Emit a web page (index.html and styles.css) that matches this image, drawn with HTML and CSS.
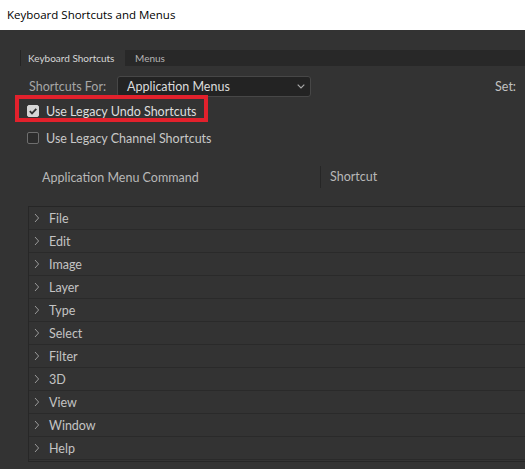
FILE: index.html
```html
<!DOCTYPE html>
<html>
<head>
<meta charset="utf-8">
<link rel="stylesheet" href="styles.css">
</head>
<body>
<div class="window">
  <div class="titlebar">Keyboard Shortcuts and Menus</div>
  <div class="main">
    <div class="tabs">
      <div class="tab active">Keyboard Shortcuts</div>
      <div class="tab">Menus</div>
    </div>
    <div class="for-row">
      <span class="label">Shortcuts For:</span>
      <div class="select">
        <span>Application Menus</span>
        <svg class="chev-down" width="8" height="5" viewBox="0 0 8 5"><path d="M0.7 0.7 L4 4 L7.3 0.7" fill="none" stroke="#a8a8a8" stroke-width="1.2"/></svg>
      </div>
      <span class="set">Set:</span>
    </div>
    <div class="check-row highlight">
      <span class="box checked"><svg width="12" height="12" viewBox="0 0 12 12"><path d="M2.8 6.2 L5 8.4 L9.3 3.8" fill="none" stroke="#333" stroke-width="1.8"/></svg></span>
      <span class="check-label">Use Legacy Undo Shortcuts</span>
    </div>
    <div class="check-row second">
      <span class="box"></span>
      <span class="check-label">Use Legacy Channel Shortcuts</span>
    </div>
    <div class="header">
      <div class="col-cmd">Application Menu Command</div>
      <div class="col-key">Shortcut</div>
    </div>
    <div class="table">
      <div class="item"><svg class="chev" width="6" height="10" viewBox="0 0 6 10"><path d="M1 1 L4.6 5 L1 9" fill="none" stroke="#9a9a9a" stroke-width="1"/></svg>File</div>
      <div class="item"><svg class="chev" width="6" height="10" viewBox="0 0 6 10"><path d="M1 1 L4.6 5 L1 9" fill="none" stroke="#9a9a9a" stroke-width="1"/></svg>Edit</div>
      <div class="item"><svg class="chev" width="6" height="10" viewBox="0 0 6 10"><path d="M1 1 L4.6 5 L1 9" fill="none" stroke="#9a9a9a" stroke-width="1"/></svg>Image</div>
      <div class="item"><svg class="chev" width="6" height="10" viewBox="0 0 6 10"><path d="M1 1 L4.6 5 L1 9" fill="none" stroke="#9a9a9a" stroke-width="1"/></svg>Layer</div>
      <div class="item"><svg class="chev" width="6" height="10" viewBox="0 0 6 10"><path d="M1 1 L4.6 5 L1 9" fill="none" stroke="#9a9a9a" stroke-width="1"/></svg>Type</div>
      <div class="item"><svg class="chev" width="6" height="10" viewBox="0 0 6 10"><path d="M1 1 L4.6 5 L1 9" fill="none" stroke="#9a9a9a" stroke-width="1"/></svg>Select</div>
      <div class="item"><svg class="chev" width="6" height="10" viewBox="0 0 6 10"><path d="M1 1 L4.6 5 L1 9" fill="none" stroke="#9a9a9a" stroke-width="1"/></svg>Filter</div>
      <div class="item"><svg class="chev" width="6" height="10" viewBox="0 0 6 10"><path d="M1 1 L4.6 5 L1 9" fill="none" stroke="#9a9a9a" stroke-width="1"/></svg>3D</div>
      <div class="item"><svg class="chev" width="6" height="10" viewBox="0 0 6 10"><path d="M1 1 L4.6 5 L1 9" fill="none" stroke="#9a9a9a" stroke-width="1"/></svg>View</div>
      <div class="item"><svg class="chev" width="6" height="10" viewBox="0 0 6 10"><path d="M1 1 L4.6 5 L1 9" fill="none" stroke="#9a9a9a" stroke-width="1"/></svg>Window</div>
      <div class="item"><svg class="chev" width="6" height="10" viewBox="0 0 6 10"><path d="M1 1 L4.6 5 L1 9" fill="none" stroke="#9a9a9a" stroke-width="1"/></svg>Help</div>
    </div>
  </div>
</div>
</body>
</html>
```
FILE: styles.css
```css
html, body {
  margin: 0;
  padding: 0;
  width: 525px;
  height: 469px;
  overflow: hidden;
  background: #333333;
}
.window {
  width: 525px;
  height: 469px;
  display: flex;
  flex-direction: column;
  font-family: Lato, "Open Sans", sans-serif;
}
.titlebar {
  height: 30px;
  flex: none;
  background: #ffffff;
  color: #000;
  font-family: "Open Sans", sans-serif;
  font-size: 11.5px;
  line-height: 30px;
  padding-left: 7px;
  box-sizing: border-box;
}
.main {
  flex: 1;
  background: #333333;
  padding-top: 20px;
  display: flex;
  flex-direction: column;
}
.tabs {
  margin-left: 20px;
  height: 16px;
  background: #282828;
  border-left: 1px solid #242424;
  display: flex;
  font-size: 10px;
  line-height: 16px;
}
.tab {
  color: #b4b4b4;
  padding: 0 8px 0 10px;
}
.tab.active {
  background: #333333;
  color: #d6d6d6;
  width: 104px;
  box-sizing: border-box;
  padding-left: 7px;
}
.for-row {
  margin-top: 10px;
  height: 21px;
  display: flex;
  align-items: center;
  padding-left: 29px;
  font-size: 12.5px;
}
.label {
  color: #a6a6a6;
  width: 88px;
}
.select {
  width: 194px;
  height: 21px;
  box-sizing: border-box;
  background: #232323;
  border: 1px solid #474747;
  border-radius: 3px;
  display: flex;
  align-items: center;
  padding-left: 9px;
  color: #dcdcdc;
}
.chev-down {
  margin-left: auto;
  margin-right: 5px;
}
.set {
  margin-left: auto;
  margin-right: 9px;
  color: #c2c2c2;
}
.check-row {
  display: flex;
  align-items: center;
  font-size: 12.5px;
  color: #dedede;
}
.check-row.highlight {
  margin-left: 19px;
  margin-top: 2px;
  width: 185px;
  height: 19px;
  box-sizing: border-box;
  padding: 5px 0 0 8px;
  outline: 4px solid #e2212c;
}
.check-row.second {
  margin-top: 13px;
  height: 14px;
  padding-left: 27px;
  color: #c8c8c8;
}
.box {
  width: 12px;
  height: 12px;
  box-sizing: border-box;
  border-radius: 2px;
  border: 1px solid #6e6e6e;
  background: #2c2c2c;
  margin-right: 7px;
  flex: none;
  display: flex;
}
.box.checked {
  background: #d6d6d6;
  border-color: #d6d6d6;
}
.box.checked svg {
  margin: -1px;
}
.header {
  margin-top: 21px;
  height: 22px;
  display: flex;
  align-items: center;
  font-size: 12.5px;
  color: #b8b8b8;
}
.col-cmd {
  width: 320px;
  box-sizing: border-box;
  padding-left: 42px;
}
.col-key {
  height: 22px;
  line-height: 22px;
  border-left: 1px solid #262626;
  padding-left: 9px;
}
.table {
  margin-top: 18px;
  margin-left: 28px;
  border-top: 1px solid #262626;
  border-left: 1px solid #272727;
  border-bottom: 1px solid #262626;
  padding-bottom: 1px;
}
.item {
  height: 23px;
  box-sizing: border-box;
  border-bottom: 1px solid #2a2a2a;
  display: flex;
  align-items: center;
  padding-left: 5px;
  font-size: 12.5px;
  color: #c4c4c4;
}
.chev {
  margin-right: 9px;
  flex: none;
}
```
